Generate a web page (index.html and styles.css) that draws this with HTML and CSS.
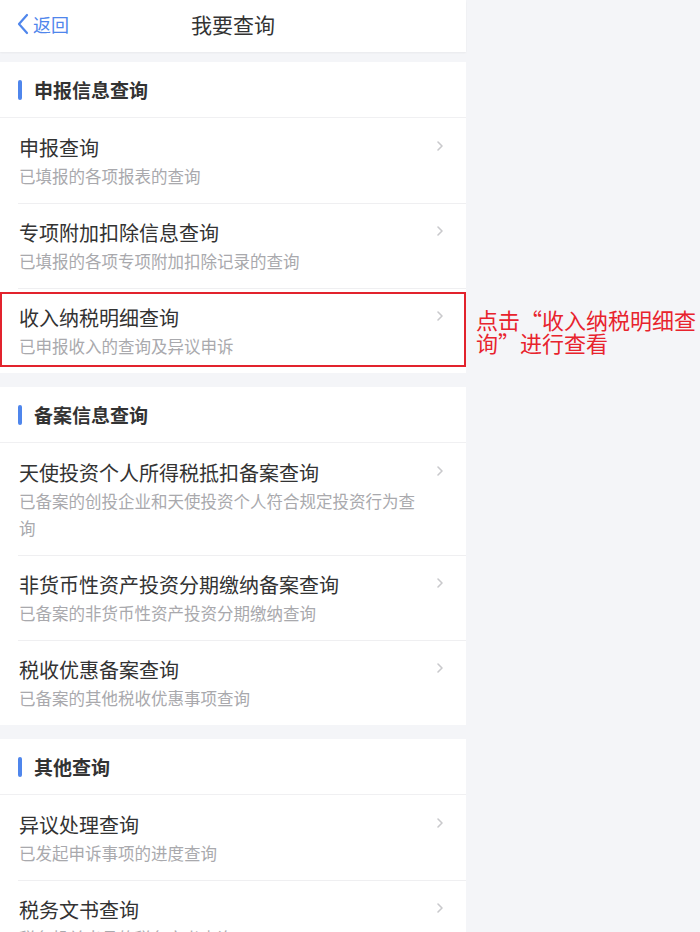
FILE: index.html
```html
<!DOCTYPE html>
<html>
<head>
    <meta charset="utf-8">
    <title>我要查询</title>
    <link rel="stylesheet" href="styles.css">
</head>
<body>
    <div class="page">
        <div class="phone">
            <div class="topbar">
                <div class="back">
                    <svg width="14" height="22" viewBox="0 0 14 22"><path d="M11 2 L3 11 L11 20" fill="none" stroke="#4f86ec" stroke-width="2.2" stroke-linecap="round" stroke-linejoin="round"/></svg>
                    <span>返回</span>
                </div>
                <div class="title">我要查询</div>
            </div>

            <div class="section first">
                <div class="section-head"><i class="bar"></i>申报信息查询</div>
                <div class="item">
                    <div class="item-text">
                        <div class="item-title">申报查询</div>
                        <div class="item-sub">已填报的各项报表的查询</div>
                    </div>
                    <svg class="chev" width="8" height="12" viewBox="0 0 8 12"><path d="M2 2 L6 6 L2 10" fill="none" stroke="#c9c9cc" stroke-width="1.6" stroke-linecap="round" stroke-linejoin="round"/></svg>
                </div>
                <div class="item">
                    <div class="item-text">
                        <div class="item-title">专项附加扣除信息查询</div>
                        <div class="item-sub">已填报的各项专项附加扣除记录的查询</div>
                    </div>
                    <svg class="chev" width="8" height="12" viewBox="0 0 8 12"><path d="M2 2 L6 6 L2 10" fill="none" stroke="#c9c9cc" stroke-width="1.6" stroke-linecap="round" stroke-linejoin="round"/></svg>
                </div>
                <div class="item marked">
                    <div class="item-text">
                        <div class="item-title">收入纳税明细查询</div>
                        <div class="item-sub">已申报收入的查询及异议申诉</div>
                    </div>
                    <svg class="chev" width="8" height="12" viewBox="0 0 8 12"><path d="M2 2 L6 6 L2 10" fill="none" stroke="#c9c9cc" stroke-width="1.6" stroke-linecap="round" stroke-linejoin="round"/></svg>
                </div>
            </div>

            <div class="section">
                <div class="section-head"><i class="bar"></i>备案信息查询</div>
                <div class="item">
                    <div class="item-text">
                        <div class="item-title">天使投资个人所得税抵扣备案查询</div>
                        <div class="item-sub">已备案的创投企业和天使投资个人符合规定投资行为查询</div>
                    </div>
                    <svg class="chev" width="8" height="12" viewBox="0 0 8 12"><path d="M2 2 L6 6 L2 10" fill="none" stroke="#c9c9cc" stroke-width="1.6" stroke-linecap="round" stroke-linejoin="round"/></svg>
                </div>
                <div class="item">
                    <div class="item-text">
                        <div class="item-title">非货币性资产投资分期缴纳备案查询</div>
                        <div class="item-sub">已备案的非货币性资产投资分期缴纳查询</div>
                    </div>
                    <svg class="chev" width="8" height="12" viewBox="0 0 8 12"><path d="M2 2 L6 6 L2 10" fill="none" stroke="#c9c9cc" stroke-width="1.6" stroke-linecap="round" stroke-linejoin="round"/></svg>
                </div>
                <div class="item">
                    <div class="item-text">
                        <div class="item-title">税收优惠备案查询</div>
                        <div class="item-sub">已备案的其他税收优惠事项查询</div>
                    </div>
                    <svg class="chev" width="8" height="12" viewBox="0 0 8 12"><path d="M2 2 L6 6 L2 10" fill="none" stroke="#c9c9cc" stroke-width="1.6" stroke-linecap="round" stroke-linejoin="round"/></svg>
                </div>
            </div>

            <div class="section">
                <div class="section-head"><i class="bar"></i>其他查询</div>
                <div class="item">
                    <div class="item-text">
                        <div class="item-title">异议处理查询</div>
                        <div class="item-sub">已发起申诉事项的进度查询</div>
                    </div>
                    <svg class="chev" width="8" height="12" viewBox="0 0 8 12"><path d="M2 2 L6 6 L2 10" fill="none" stroke="#c9c9cc" stroke-width="1.6" stroke-linecap="round" stroke-linejoin="round"/></svg>
                </div>
                <div class="item">
                    <div class="item-text">
                        <div class="item-title">税务文书查询</div>
                        <div class="item-sub">税务机关出具的税务文书查询</div>
                    </div>
                    <svg class="chev" width="8" height="12" viewBox="0 0 8 12"><path d="M2 2 L6 6 L2 10" fill="none" stroke="#c9c9cc" stroke-width="1.6" stroke-linecap="round" stroke-linejoin="round"/></svg>
                </div>
            </div>
        </div>

        <div class="note">点击“收入纳税明细查询”进行查看</div>
    </div>
</body>
</html>
```

FILE: styles.css
```css
body {
    margin: 0;
    padding: 0;
    background-color: #f4f5f8;
    font-family: "Noto Sans CJK SC", "Noto Sans", sans-serif;
    color: #333;
}
.page {
    display: flex;
    align-items: flex-start;
    height: 932px;
    overflow: hidden;
}
.phone {
    width: 466px;
    flex: none;
    background-color: #f4f5f8;
}
.topbar {
    height: 52px;
    background-color: #fff;
    display: flex;
    align-items: flex-start;
    justify-content: center;
    position: relative;
    box-shadow: 0 1px 2px rgba(0, 0, 0, 0.05);
}
.back {
    position: absolute;
    left: 16px;
    top: 11px;
    display: flex;
    align-items: center;
    gap: 3px;
    color: #4f86ec;
    font-size: 18px;
    line-height: 26px;
}
.title {
    font-size: 21px;
    line-height: 48px;
}
.section {
    background-color: #fff;
    margin-top: 14px;
}
.section.first {
    margin-top: 10px;
}
.section-head {
    height: 55px;
    display: flex;
    align-items: center;
    padding-left: 18px;
    font-size: 19px;
    font-weight: 600;
    color: #333;
    border-bottom: 1px solid #f0f0f2;
}
.bar {
    width: 4px;
    height: 20px;
    border-radius: 2px;
    background-color: #4f86ec;
    margin-right: 12px;
}
.item {
    display: flex;
    align-items: flex-start;
    padding: 17px 22px 13px 19px;
    gap: 12px;
    position: relative;
}
.item + .item::before {
    content: "";
    position: absolute;
    left: 18px;
    right: 0;
    top: 0;
    border-top: 1px solid #efeff1;
}
.item-text {
    flex: 1;
}
.item-title {
    font-size: 20px;
    line-height: 26px;
    color: #333;
}
.item-sub {
    margin-top: 2px;
    font-size: 16.5px;
    line-height: 27px;
    color: #a9a9ad;
}
.chev {
    flex: none;
    margin-top: 5px;
}
.item.marked::after {
    content: "";
    position: absolute;
    left: 0;
    right: 0;
    top: 4px;
    bottom: 6px;
    border: 2px solid #e2232d;
}
.note {
    width: 224px;
    margin: 308px 0 0 10px;
    font-size: 22px;
    line-height: 23px;
    color: #e8232d;
}
```
